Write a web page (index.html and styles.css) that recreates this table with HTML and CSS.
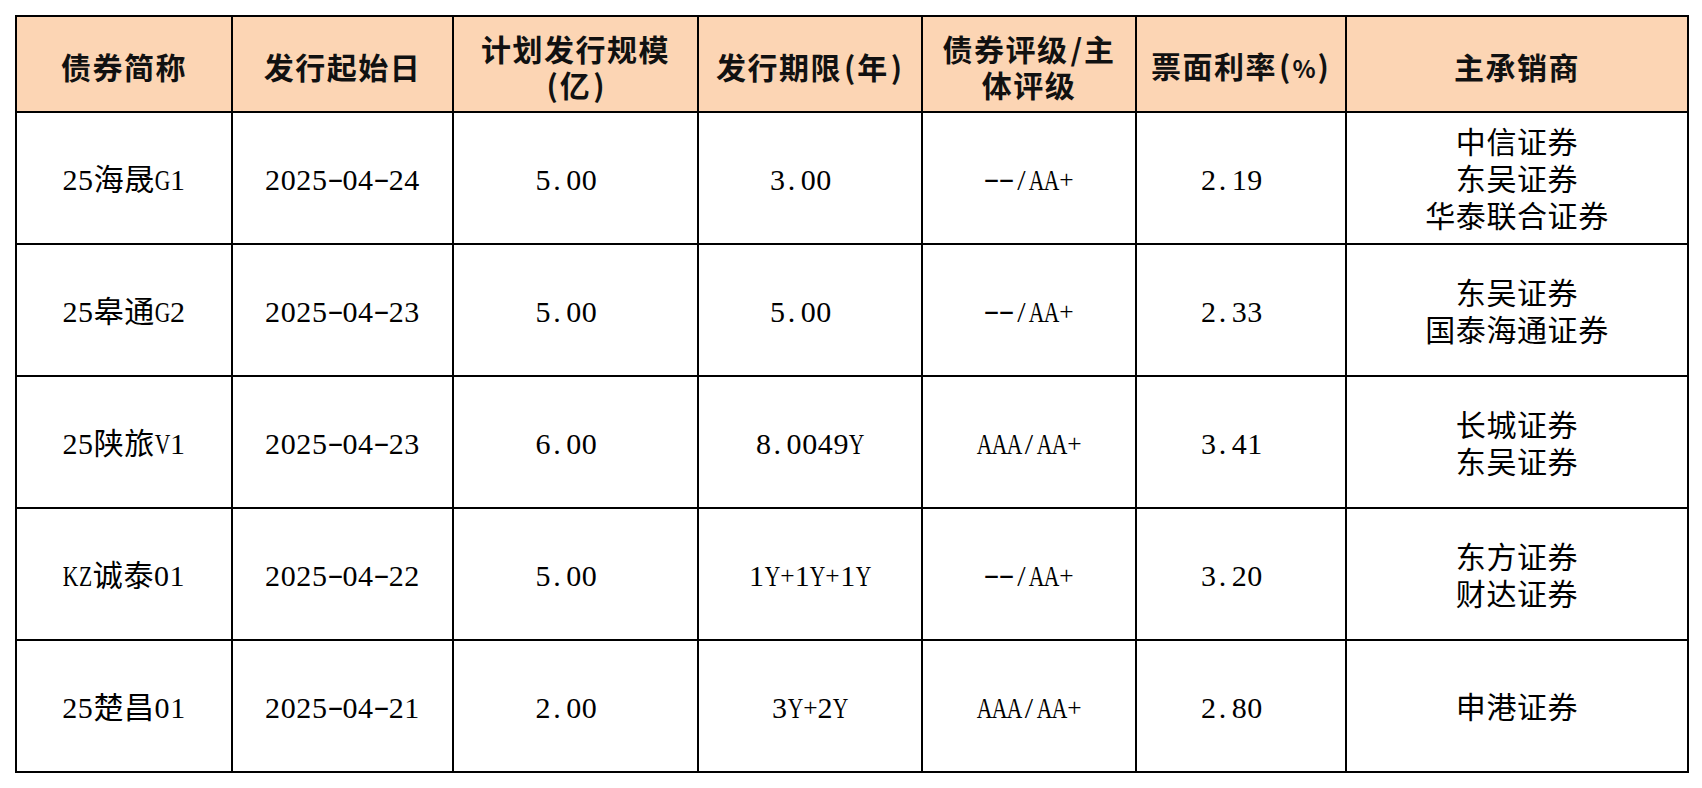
FILE: index.html
```html
<!DOCTYPE html>
<html lang="zh-CN">
<head>
<meta charset="utf-8">
<title>债券发行</title>
<link rel="stylesheet" href="styles.css">
</head>
<body>
<div class="page">
  <table class="bonds">
    <colgroup>
      <col class="c1"><col class="c2"><col class="c3"><col class="c4"><col class="c5"><col class="c6"><col class="c7">
    </colgroup>
    <thead>
      <tr>
        <th>债券简称</th>
        <th>发行起始日</th>
        <th>计划发行规模<br><span class="par">(</span>亿<span class="par">)</span></th>
        <th>发行期限<span class="par">(</span>年<span class="par">)</span></th>
        <th>债券评级<span class="par">/</span>主<br>体评级</th>
        <th>票面利率<span class="par">(</span><span class="pct">%</span><span class="par">)</span></th>
        <th>主承销商</th>
      </tr>
    </thead>
    <tbody>
      <tr>
        <td>25海晟<span class="h c">G</span>1</td>
        <td>2025<span class="h d">-</span>04<span class="h d">-</span>24</td>
        <td class="num">5<span class="h p">.</span>00</td>
        <td class="num">3<span class="h p">.</span>00</td>
        <td><span class="h d">-</span><span class="h d">-</span><span class="h">/</span><span class="h c">A</span><span class="h c">A</span><span class="h s">+</span></td>
        <td class="num">2<span class="h p">.</span>19</td>
        <td class="multi">中信证券<br>东吴证券<br>华泰联合证券</td>
      </tr>
      <tr>
        <td>25皋通<span class="h c">G</span>2</td>
        <td>2025<span class="h d">-</span>04<span class="h d">-</span>23</td>
        <td class="num">5<span class="h p">.</span>00</td>
        <td class="num">5<span class="h p">.</span>00</td>
        <td><span class="h d">-</span><span class="h d">-</span><span class="h">/</span><span class="h c">A</span><span class="h c">A</span><span class="h s">+</span></td>
        <td class="num">2<span class="h p">.</span>33</td>
        <td class="multi">东吴证券<br>国泰海通证券</td>
      </tr>
      <tr>
        <td>25陕旅<span class="h c">V</span>1</td>
        <td>2025<span class="h d">-</span>04<span class="h d">-</span>23</td>
        <td class="num">6<span class="h p">.</span>00</td>
        <td>8<span class="h p">.</span>0049<span class="h c">Y</span></td>
        <td><span class="h c">A</span><span class="h c">A</span><span class="h c">A</span><span class="h">/</span><span class="h c">A</span><span class="h c">A</span><span class="h s">+</span></td>
        <td class="num">3<span class="h p">.</span>41</td>
        <td class="multi">长城证券<br>东吴证券</td>
      </tr>
      <tr>
        <td><span class="h c">K</span><span class="h c">Z</span>诚泰01</td>
        <td>2025<span class="h d">-</span>04<span class="h d">-</span>22</td>
        <td class="num">5<span class="h p">.</span>00</td>
        <td>1<span class="h c">Y</span><span class="h s">+</span>1<span class="h c">Y</span><span class="h s">+</span>1<span class="h c">Y</span></td>
        <td><span class="h d">-</span><span class="h d">-</span><span class="h">/</span><span class="h c">A</span><span class="h c">A</span><span class="h s">+</span></td>
        <td class="num">3<span class="h p">.</span>20</td>
        <td class="multi">东方证券<br>财达证券</td>
      </tr>
      <tr>
        <td>25楚昌01</td>
        <td>2025<span class="h d">-</span>04<span class="h d">-</span>21</td>
        <td class="num">2<span class="h p">.</span>00</td>
        <td>3<span class="h c">Y</span><span class="h s">+</span>2<span class="h c">Y</span></td>
        <td><span class="h c">A</span><span class="h c">A</span><span class="h c">A</span><span class="h">/</span><span class="h c">A</span><span class="h c">A</span><span class="h s">+</span></td>
        <td class="num">2<span class="h p">.</span>80</td>
        <td class="multi">申港证券</td>
      </tr>
    </tbody>
  </table>
</div>
</body>
</html>
```
FILE: styles.css
```css
html, body {
  margin: 0;
  padding: 0;
  background: #ffffff;
}

.page {
  padding: 15px 0 0 15px;
}

.bonds {
  border-collapse: collapse;
  table-layout: fixed;
  width: 1672px;
  border: 2px solid #000;
  font-family: "Liberation Serif", "Noto Sans CJK SC", serif;
  font-size: 30px;
  color: #000;
}

.c1 { width: 216px; }
.c2 { width: 221px; }
.c3 { width: 245px; }
.c4 { width: 224px; }
.c5 { width: 214px; }
.c6 { width: 210px; }
.c7 { width: 342px; }

.bonds th,
.bonds td {
  border: 2px solid #000;
  padding: 0;
  text-align: center;
  vertical-align: middle;
}

.bonds thead tr {
  height: 96px;
}

.bonds th {
  background: #fcd5b4;
  font-family: "Noto Sans CJK SC", sans-serif;
  font-weight: 700;
  font-size: 30px;
  line-height: 36px;
  letter-spacing: 1.5px;
  color: #111;
  padding-top: 4px;
}

.par {
  padding: 0 2px;
  letter-spacing: 0;
}

.pct {
  letter-spacing: 0;
  font-size: 24px;
}

.bonds tbody tr {
  height: 132px;
}

.bonds td {
  line-height: 37px;
  letter-spacing: 0.6px;
  padding-top: 3px;
}

.bonds td.num {
  padding-right: 18px;
}

.h {
  display: inline-flex;
  justify-content: center;
  width: 0.5em;
  box-sizing: border-box;
  letter-spacing: 0;
}

.h.c {
  transform: scaleX(0.72);
}

.h.d {
  transform: translateY(-2px) scaleX(1.6);
}

.h.p {
  justify-content: flex-start;
  padding-left: 2px;
}

.h.s {
  transform: scale(0.85);
}
```
